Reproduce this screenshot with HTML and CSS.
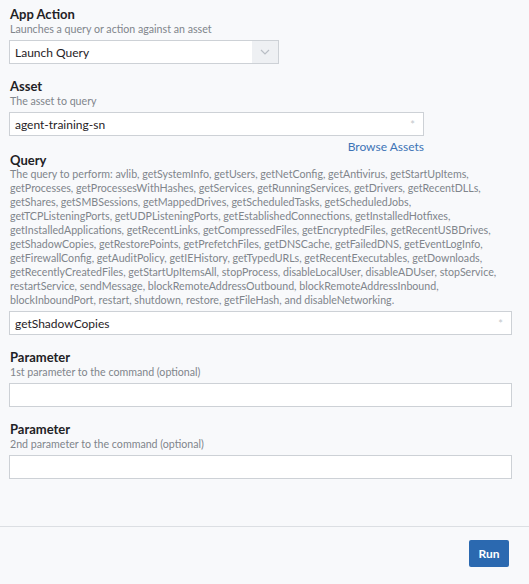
FILE: index.html
```html
<!DOCTYPE html>
<html>
<head>
    <title>App Action</title>
    <link rel="stylesheet" href="styles.css">
</head>
<body>
    <form class="action-form">
        <div class="field">
            <label class="field-label">App Action</label>
            <div class="field-hint">Launches a query or action against an asset</div>
            <div class="select">
                <span class="select-value">Launch Query</span>
                <span class="select-arrow">
                    <svg width="10" height="6" viewBox="0 0 10 6"><path d="M1 1l4 4 4-4" fill="none" stroke="#b9bec5" stroke-width="1.2"/></svg>
                </span>
            </div>
        </div>

        <div class="field field-linked">
            <label class="field-label">Asset</label>
            <div class="field-hint">The asset to query</div>
            <div class="input input-asset">
                <span class="input-value">agent-training-sn</span>
                <span class="input-required">*</span>
            </div>
            <div class="browse">
                <a href="#">Browse Assets</a>
            </div>
        </div>

        <div class="field">
            <label class="field-label field-label-tight">Query</label>
            <div class="field-hint">The query to perform: avlib, getSystemInfo, getUsers, getNetConfig, getAntivirus, getStartUpItems, getProcesses, getProcessesWithHashes, getServices, getRunningServices, getDrivers, getRecentDLLs, getShares, getSMBSessions, getMappedDrives, getScheduledTasks, getScheduledJobs, getTCPListeningPorts, getUDPListeningPorts, getEstablishedConnections, getInstalledHotfixes, getInstalledApplications, getRecentLinks, getCompressedFiles, getEncryptedFiles, getRecentUSBDrives, getShadowCopies, getRestorePoints, getPrefetchFiles, getDNSCache, getFailedDNS, getEventLogInfo, getFirewallConfig, getAuditPolicy, getIEHistory, getTypedURLs, getRecentExecutables, getDownloads, getRecentlyCreatedFiles, getStartUpItemsAll, stopProcess, disableLocalUser, disableADUser, stopService, restartService, sendMessage, blockRemoteAddressOutbound, blockRemoteAddressInbound, blockInboundPort, restart, shutdown, restore, getFileHash, and disableNetworking.</div>
            <div class="input">
                <span class="input-value">getShadowCopies</span>
                <span class="input-required">*</span>
            </div>
        </div>

        <div class="field">
            <label class="field-label">Parameter</label>
            <div class="field-hint">1st parameter to the command (optional)</div>
            <div class="input"></div>
        </div>

        <div class="field">
            <label class="field-label">Parameter</label>
            <div class="field-hint">2nd parameter to the command (optional)</div>
            <div class="input"></div>
        </div>
    </form>

    <footer>
        <button type="button" class="btn-run">Run</button>
    </footer>
</body>
</html>
```

FILE: styles.css
```css
:root {
    --text-color: #1f2226;
    --hint-color: #80858b;
    --border-color: #cdd1d6;
    --background-color: #f8f9fb;
    --link-color: #3d74b6;
    --primary-color: #2b69b0;
}

* {
    margin: 0;
    padding: 0;
    box-sizing: border-box;
}

body {
    font-family: Lato, sans-serif;
    color: var(--text-color);
    background-color: var(--background-color);
    width: 529px;
    height: 584px;
    overflow: hidden;
}

.action-form {
    padding: 6px 17px 0 9px;
    height: 526px;
}

.field {
    margin-bottom: 14px;
}

.field-linked {
    margin-bottom: 0;
}

.field-label {
    display: block;
    font-size: 13px;
    font-weight: 700;
    line-height: 16px;
    padding-left: 1px;
}

.field-label-tight {
    line-height: 14px;
}

.field-hint {
    font-size: 10.65px;
    line-height: 14px;
    color: var(--hint-color);
    padding-left: 1px;
}

.select,
.input {
    display: flex;
    align-items: center;
    height: 24px;
    margin-top: 4px;
    background: #fff;
    border: 1px solid var(--border-color);
    font-size: 12px;
}

.select {
    width: 270px;
}

.select-value,
.input-value {
    flex: 1;
    padding-left: 5px;
}

.select-arrow {
    display: flex;
    align-items: center;
    justify-content: center;
    width: 26px;
    height: 100%;
    background: #eef0f3;
}

.input-asset {
    width: 415px;
}

.input-required {
    color: #c3c7cc;
    font-size: 11px;
    padding-right: 8px;
}

.browse {
    width: 415px;
    text-align: right;
    margin-top: 5px;
    font-size: 12px;
    line-height: 12px;
}

.browse a {
    color: var(--link-color);
    text-decoration: none;
}

footer {
    border-top: 1px solid #dcdfe3;
    display: flex;
    justify-content: flex-end;
    padding: 13px 20px 0 0;
}

.btn-run {
    width: 40px;
    height: 27px;
    background: var(--primary-color);
    color: #fff;
    border: none;
    border-radius: 2px;
    font-family: Lato, sans-serif;
    font-size: 12px;
    font-weight: 700;
}
```
